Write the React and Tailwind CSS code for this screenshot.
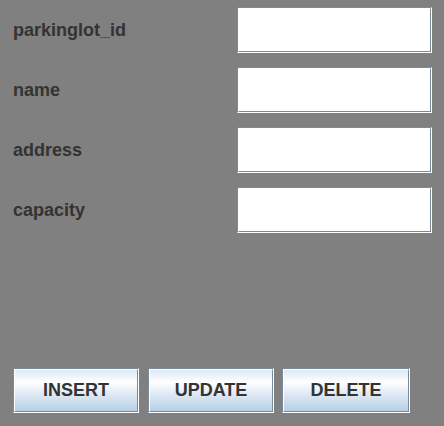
import React from "react";

function Field() {
  return (
    <div className="w-[195px] h-[46px] border-t border-l border-r border-b border-t-[#7a8a99] border-l-[#7a8a99] border-r-white border-b-white">
      <div className="w-full h-full bg-white border-t border-l border-r border-b border-t-white border-l-white border-r-[#7a8a99] border-b-[#7a8a99]" />
    </div>
  );
}

function Btn({ label, w }) {
  return (
    <div
      className={`${w} h-[45px] border-t border-l border-r border-b border-t-[#7a8a99] border-l-[#7a8a99] border-r-white border-b-white`}
    >
      <div className="w-full h-full flex items-center justify-center border-t border-l border-r border-b border-t-white border-l-white border-r-[#7a8a99] border-b-[#7a8a99] bg-[linear-gradient(to_bottom,#dde8f3_0%,#ffffff_30%,#dde8f3_60%,#b8cfe5_100%)] text-[18px] font-bold text-[#333333]">
        {label}
      </div>
    </div>
  );
}

export default function App() {
  const labels = ["parkinglot_id", "name", "address", "capacity"];
  return (
    <div className="w-[444px] h-[426px] bg-[#808080] font-['Liberation_Sans',Arial,sans-serif] overflow-hidden">
      <div className="flex flex-col gap-[14px] pt-[7px]">
        {labels.map((l) => (
          <div key={l} className="flex items-center">
            <div className="w-[237px] pl-[13px] text-[18px] font-bold text-[#333333] leading-none">
              {l}
            </div>
            <Field />
          </div>
        ))}
      </div>
      <div className="flex mt-[135px] pl-[13px]">
        <Btn label="INSERT" w="w-[126px]" />
        <div className="w-[9px]" />
        <Btn label="UPDATE" w="w-[126px]" />
        <div className="w-[8px]" />
        <Btn label="DELETE" w="w-[128px]" />
      </div>
    </div>
  );
}
